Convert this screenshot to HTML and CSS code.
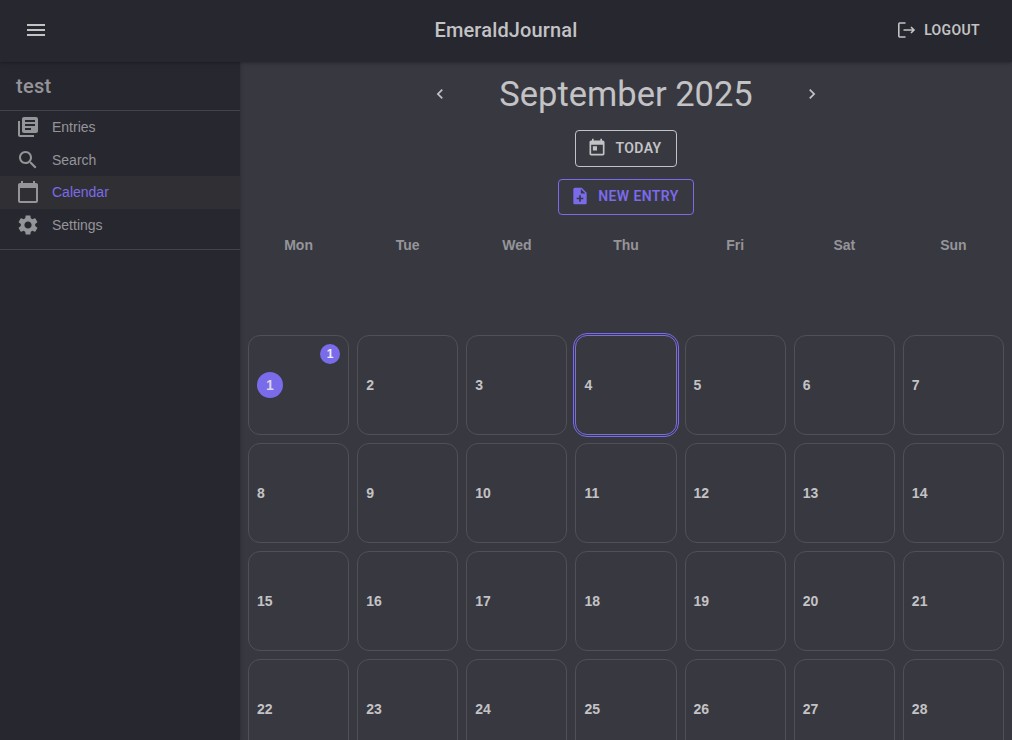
FILE: index.html
```html
<!DOCTYPE html>
<html lang="en">
<head>
<meta charset="utf-8">
<title>EmeraldJournal</title>
<link rel="stylesheet" href="styles.css">
</head>
<body>
<header class="topbar">
  <button class="menu-btn" aria-label="Menu"><svg width="24" height="24" viewBox="0 0 24 24"><path d="M3 6H21V8H3ZM3 11H21V13H3ZM3 16H21V18H3Z"/></svg></button>
  <h1 class="brand">EmeraldJournal</h1>
  <button class="logout"><svg width="20" height="20" viewBox="0 0 20 20"><path d="M9.500 3H3.700Q2.800 3 2.800 3.900V16.100Q2.800 17 3.700 17H9.500M7.500 10H17.500M15 7L18 10L15 13"/></svg><span>LOGOUT</span></button>
</header>
<div class="shell">
  <aside class="sidebar">
    <h2 class="user">test</h2>
    <nav class="nav">
      <a class="nav-item"><svg width="24" height="24" viewBox="0 0 24 24"><path d="M4 6H2v14c0 1.100.9 2 2 2h14v-2H4V6zm16-4H8c-1.100 0-2 .9-2 2v12c0 1.100.9 2 2 2h12c1.100 0 2-.9 2-2V4c0-1.100-.9-2-2-2zm-1 9H9V9h10v2zm-4 4H9v-2h6v2zm4-8H9V5h10v2z"/></svg>Entries</a>
      <a class="nav-item"><svg width="24" height="24" viewBox="0 0 24 24"><path d="M15.500 14h-.79l-.28-.27C15.410 12.590 16 11.110 16 9.500 16 5.910 13.090 3 9.500 3S3 5.910 3 9.500 5.910 16 9.500 16c1.610 0 3.090-.59 4.230-1.570l.27.28v.79l5 4.990L20.490 19l-4.990-5zm-6 0C7.010 14 5 11.990 5 9.500S7.010 5 9.500 5 14 7.010 14 9.500 11.990 14 9.500 14z"/></svg>Search</a>
      <a class="nav-item active"><svg width="24" height="24" viewBox="0 0 24 24"><path d="M20 3h-1V1h-2v2H7V1H5v2H4c-1.100 0-2 .9-2 2v16c0 1.100.9 2 2 2h16c1.100 0 2-.9 2-2V5c0-1.100-.9-2-2-2zm0 18H4V8h16v13z"/></svg>Calendar</a>
      <a class="nav-item"><svg width="24" height="24" viewBox="0 0 24 24"><path d="M19.140 12.940c.04-.3.060-.61.060-.94 0-.32-.02-.64-.07-.94l2.030-1.580c.18-.14.230-.41.120-.61l-1.920-3.320c-.12-.22-.37-.29-.59-.22l-2.390.96c-.5-.38-1.030-.7-1.620-.94l-.36-2.540c-.04-.24-.24-.41-.48-.41h-3.840c-.24 0-.43.170-.47.410l-.36 2.540c-.59.240-1.130.570-1.620.94l-2.390-.96c-.22-.08-.47 0-.59.220L2.740 8.870c-.12.210-.08.470.12.610l2.030 1.580c-.05.300-.09.630-.09.940s.02.640.07.940l-2.030 1.580c-.18.140-.23.410-.12.610l1.920 3.320c.12.220.37.290.59.220l2.390-.96c.5.380 1.030.7 1.620.94l.36 2.540c.05.240.24.410.48.410h3.840c.24 0 .44-.17.470-.41l.36-2.540c.59-.24 1.130-.56 1.620-.94l2.390.96c.22.080.47 0 .59-.22l1.920-3.320c.12-.22.070-.47-.12-.61l-2.010-1.580zM12 15.600c-1.980 0-3.600-1.620-3.600-3.600s1.620-3.600 3.600-3.600 3.600 1.620 3.600 3.600-1.620 3.600-3.600 3.600z"/></svg>Settings</a>
    </nav>
  </aside>
  <main class="main">
    <div class="month">
      <button class="arrow" aria-label="Previous month"><svg width="20" height="20" viewBox="0 0 24 24"><path d="M15.410 7.410L14 6l-6 6 6 6 1.410-1.410L10.830 12z"/></svg></button>
      <h2 class="month-name">September 2025</h2>
      <button class="arrow" aria-label="Next month"><svg width="20" height="20" viewBox="0 0 24 24"><path d="M8.590 16.590L13.170 12 8.590 7.410 10 6l6 6-6 6z"/></svg></button>
    </div>
    <button class="btn today"><svg width="20" height="20" viewBox="0 0 24 24"><path d="M19 3h-1V1h-2v2H8V1H6v2H5c-1.110 0-2 .9-2 2v14c0 1.100.89 2 2 2h14c1.100 0 2-.9 2-2V5c0-1.100-.9-2-2-2zm0 16H5V8h14v11zM7 10h5v5H7z"/></svg>TODAY</button>
    <button class="btn new"><svg width="20" height="20" viewBox="0 0 24 24"><path d="M14 2H6c-1.100 0-2 .9-2 2v16c0 1.100.89 2 2 2h12c1.100 0 2-.9 2-2V8l-6-6zm2 14h-3v3h-2v-3H8v-2h3v-3h2v3h3v2zm-3-7V3.500L18.500 9H13z"/></svg>NEW ENTRY</button>
    <div class="grid weekdays"><span>Mon</span><span>Tue</span><span>Wed</span><span>Thu</span><span>Fri</span><span>Sat</span><span>Sun</span></div>
    <div class="grid days">
      <div class="day"><span class="dot">1</span><span class="badge">1</span></div><div class="day">2</div><div class="day">3</div><div class="day selected">4</div><div class="day">5</div><div class="day">6</div><div class="day">7</div>
      <div class="day">8</div><div class="day">9</div><div class="day">10</div><div class="day">11</div><div class="day">12</div><div class="day">13</div><div class="day">14</div>
      <div class="day">15</div><div class="day">16</div><div class="day">17</div><div class="day">18</div><div class="day">19</div><div class="day">20</div><div class="day">21</div>
      <div class="day">22</div><div class="day">23</div><div class="day">24</div><div class="day">25</div><div class="day">26</div><div class="day">27</div><div class="day">28</div>
    </div>
  </main>
</div>
</body>
</html>
```
FILE: styles.css
```css
* { box-sizing: border-box; }
body { margin: 0; height: 740px; overflow: hidden; display: flex; flex-direction: column; background: #383840; color: #c3c3c5; font-family: "Liberation Sans", Arial, sans-serif; }
h1, h2 { margin: 0; }
button { border: 0; padding: 0; background: none; color: inherit; font: 500 14px Roboto, sans-serif; display: flex; align-items: center; }
svg { fill: currentColor; flex: none; }
.topbar { height: 62px; flex: none; display: grid; grid-template-columns: 1fr auto 1fr; align-items: center; padding: 0 32px 2px; background: #27272f; box-shadow: 0 0 4px rgba(0, 0, 0, .5); z-index: 2; }
.menu-btn { margin-left: -8px; justify-self: start; }
.brand { font: 500 20px/24px Roboto, sans-serif; letter-spacing: .15px; color: #c3c3c5; }
.logout { justify-self: end; gap: 8px; font-weight: 600; letter-spacing: .35px; }
.logout svg { fill: none; stroke: currentColor; stroke-width: 1.6; }
.shell { flex: 1; min-height: 0; display: flex; }
.sidebar { width: 240px; flex: none; background: #27272f; color: #959599; box-shadow: 0 0 4px rgba(0, 0, 0, .3); z-index: 1; }
.user { height: 49px; padding: 12px 16px; font: 500 20px/24px Roboto, sans-serif; letter-spacing: .3px; border-bottom: 1px solid #424248; }
.nav { padding-bottom: 8px; border-bottom: 1px solid #424248; }
.nav-item { height: 32.6px; padding: 0 16px; display: flex; align-items: center; gap: 12px; font-size: 14px; }
.nav-item.active { background: #303034; }
.active { color: #7a6bea; }
.active svg { color: #959599; }
.main { flex: 1; min-width: 0; padding: 9px 8px 0; display: flex; flex-direction: column; align-items: center; }
.main > * { flex: none; }
.month { height: 46px; display: flex; align-items: center; gap: 50px; }
.month-name { width: 252px; white-space: nowrap; font: 400 34.5px/46px Roboto, sans-serif; display: flex; justify-content: center; }
.btn { height: 37px; margin-top: 13px; padding: 0 14px 1px 11px; gap: 8px; border: 1px solid currentColor; border-radius: 4px; font-weight: 600; letter-spacing: .4px; }
.new { height: 36px; margin-top: 12px; padding-bottom: 2px; color: #7a6bea; }
.grid { width: 100%; display: grid; grid-template-columns: repeat(7, 1fr); gap: 8px; }
.weekdays { margin-top: 22px; height: 98px; font: bold 14px/16px "Liberation Sans", Arial, sans-serif; color: #959599; text-align: center; }
.days { grid-auto-rows: 100px; }
.day { position: relative; display: flex; align-items: center; padding: 0 8px; border: 1px solid #505055; border-radius: 12px; font: bold 14px/16px "Liberation Sans", Arial, sans-serif; }
.selected { border-color: #7a6bea; outline: 1px solid #7a6bea; outline-offset: 1px; }
.dot, .badge { display: flex; align-items: center; justify-content: center; border-radius: 50%; background: #7a6bea; }
.dot { width: 26px; height: 26px; color: #d8d6e8; }
.badge { position: absolute; top: 8px; right: 8px; width: 20px; height: 20px; font-size: 12px; color: #ededf5; }
```
